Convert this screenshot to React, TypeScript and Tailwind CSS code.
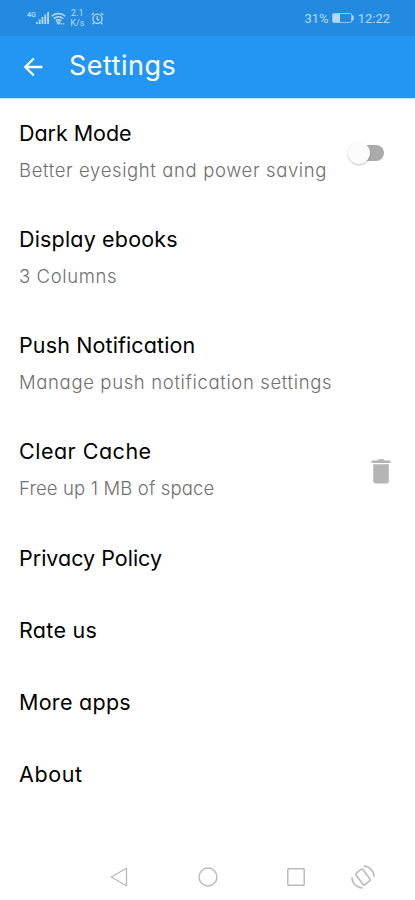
import clsx from "clsx";
import type { ReactNode } from "react";

type Setting = {
  title: string;
  titleClass: string;
  description?: string;
  descriptionClass?: string;
  action?: ReactNode;
};

const Toggle = () => (
  <div className="mr-[5px] flex h-6 w-[38px] items-center">
    <div className="relative z-10 h-[22px] w-[22px] shrink-0 rounded-full bg-[#fcfcfc] shadow-[0_1px_2px_rgba(0,0,0,0.25)]" />
    <div className="-ml-[11px] h-4 w-[25px] shrink-0 rounded-full bg-[#ababab]" />
  </div>
);

const TrashIcon = () => (
  <svg className="mt-[2px]" width="20" height="26" viewBox="0 0 20 26" fill="#b5b5b5">
    <path d="M0.5 1.6h5.7l1.2-1.4h5.2l1.2 1.4h5.7v2.4h-19z" />
    <path d="M2.2 5.2h15.6v17.1a2.2 2.2 0 0 1-2.2 2.2H4.4a2.2 2.2 0 0 1-2.2-2.2z" />
  </svg>
);

const settings: Setting[] = [
  {
    title: "Dark Mode",
    titleClass: "tracking-[-0.05px]",
    description: "Better eyesight and power saving",
    descriptionClass: "tracking-[0.62px]",
    action: <Toggle />,
  },
  {
    title: "Display ebooks",
    titleClass: "tracking-[0.17px]",
    description: "3 Columns",
    descriptionClass: "tracking-[0.6px]",
  },
  {
    title: "Push Notification",
    titleClass: "tracking-[0.12px]",
    description: "Manage push notification settings",
    descriptionClass: "tracking-[0.64px]",
  },
  {
    title: "Clear Cache",
    titleClass: "tracking-[0.5px]",
    description: "Free up 1 MB of space",
    descriptionClass: "tracking-[0.15px]",
    action: <TrashIcon />,
  },
  { title: "Privacy Policy", titleClass: "tracking-[0px]" },
  { title: "Rate us", titleClass: "tracking-[0.3px]" },
  { title: "More apps", titleClass: "tracking-[0.28px]" },
  { title: "About", titleClass: "tracking-[0.6px]" },
];

const StatusBar = () => (
  <div className="flex h-9 shrink-0 items-center justify-between bg-[#238ae0] pl-[27px] pr-[25px] font-['Roboto',sans-serif] text-[#b5daf8]">
    <div className="flex items-center">
      {/* Signal */}
      <span className="-mt-[6px] text-[7px] font-semibold leading-none">4G</span>
      <svg width="13" height="12" viewBox="0 0 13 12" fill="currentColor">
        <path d="M0 10h1.8v2H0zM2.8 7.5h1.8V12H2.8zM5.6 5h1.8v7H5.6zM8.4 2.5h1.8V12H8.4zM11.2 0H13v12h-1.8z" />
      </svg>
      {/* Wi-Fi */}
      <svg className="ml-[2px]" width="15" height="13" viewBox="0 0 15 13" fill="none" stroke="currentColor" strokeWidth="1.5">
        <path d="M0.7 4.2a9.7 9.7 0 0 1 13.6 0M2.8 6.6a6.6 6.6 0 0 1 9.4 0M4.9 8.9a3.7 3.7 0 0 1 5.2 0" />
        <path d="M6.4 10.3h2.2l-1.1 1.4zM9.5 11.7h1.4M11.9 11.7h1.4" />
      </svg>
      <div className="ml-[4px] flex w-[15px] flex-col items-center text-[9px] leading-[10px]">
        <span>2.1</span>
        <span>K/s</span>
      </div>
      {/* Alarm */}
      <svg className="ml-[6px]" width="13" height="13" viewBox="0 0 13 13" fill="none" stroke="currentColor" strokeWidth="1.3">
        <circle cx="6.5" cy="6.8" r="4.6" />
        <path d="M0.7 2.8L3 0.9M12.3 2.8L10 0.9M2.9 10.6L1.6 12.3M10.1 10.6l1.3 1.7M6.2 4.3v3l2 1" />
      </svg>
    </div>
    <div className="flex items-center text-[13px] leading-none">
      <span>31%</span>
      <svg className="ml-[3px] mr-[4px]" width="22" height="10" viewBox="0 0 22 10">
        <rect x="0.5" y="0.5" width="19" height="9" rx="1" fill="none" stroke="currentColor" strokeOpacity="0.75" />
        <path d="M1 1h7v8H1zM20 2.5h1.6v5H20z" fill="currentColor" />
      </svg>
      <span>12:22</span>
    </div>
  </div>
);

const NavigationBar = () => (
  <div className="mt-auto flex h-[46px] items-center pl-[110px] text-[#b9b9b9]">
    <svg width="18" height="20" viewBox="0 0 18 20" fill="none" stroke="currentColor" strokeWidth="1.3">
      <path d="M16.5 1.2v17.6L1.2 10z" strokeLinejoin="round" />
    </svg>
    <svg className="ml-[70px]" width="20" height="20" viewBox="0 0 20 20" fill="none" stroke="currentColor" strokeWidth="1.4">
      <circle cx="10" cy="10" r="9" />
    </svg>
    <svg className="ml-[69px]" width="18" height="18" viewBox="0 0 18 18" fill="none" stroke="currentColor" strokeWidth="1.4">
      <rect x="0.8" y="0.8" width="16.4" height="16.4" rx="0.8" />
    </svg>
    <svg className="ml-[46px]" width="24" height="24" viewBox="0 0 24 24" fill="none" stroke="currentColor" strokeWidth="1.5">
      <rect x="7.6" y="4.8" width="8.8" height="14.4" rx="1.4" transform="rotate(-37 12 12)" />
      <path d="M12.5 0.9A11 11 0 0 1 23.1 11.8M11.5 23.1A11 11 0 0 1 0.9 12.2" />
    </svg>
  </div>
);

const App = () => {
  return (
    <div className="flex h-[900px] w-[415px] flex-col overflow-hidden bg-white font-['Inter',sans-serif] [font-feature-settings:'cv11']">
      <StatusBar />
      <header className="flex h-[63px] shrink-0 items-center border-b border-[#b9dffb] bg-[#2396f3] pl-[19px] text-white">
        <svg width="28" height="28" viewBox="0 0 24 24" fill="currentColor">
          <path d="M20 11H7.83l5.59-5.59L12 4l-8 8 8 8 1.41-1.41L7.83 13H20v-2z" />
        </svg>
        <h1 className="-mt-[4px] ml-[22px] text-[27px] leading-none tracking-[0.5px]">Settings</h1>
      </header>

      <main>
        {settings.map((item) => (
          <section
            key={item.title}
            className={clsx(
              "flex items-center justify-between pl-[19px]",
              item.description ? "h-[106px] pr-[24px] pt-[2px]" : "h-[72px]",
            )}
          >
            <div className="whitespace-nowrap pb-[2px]">
              <h2 className={clsx("text-[21.5px] leading-9 text-black", item.titleClass)}>{item.title}</h2>
              {item.description && (
                <p className={clsx("text-[18.5px] font-light leading-[38px] text-[#707070]", item.descriptionClass)}>
                  {item.description}
                </p>
              )}
            </div>
            {item.action}
          </section>
        ))}
      </main>

      <NavigationBar />
    </div>
  );
};

export default App;
